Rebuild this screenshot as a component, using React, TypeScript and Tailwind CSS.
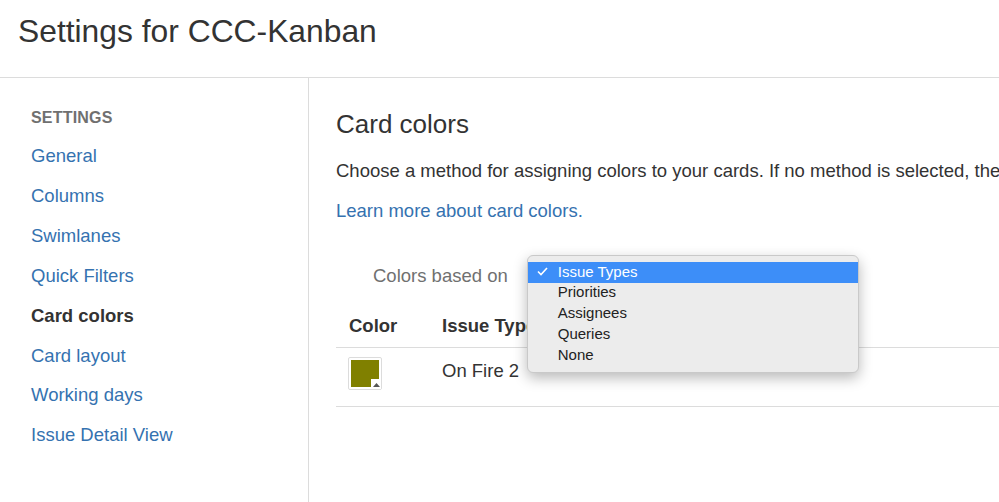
const NAV = [
  { label: "General" },
  { label: "Columns" },
  { label: "Swimlanes" },
  { label: "Quick Filters" },
  { label: "Card colors", active: true },
  { label: "Card layout" },
  { label: "Working days" },
  { label: "Issue Detail View" },
];

const OPTIONS = ["Issue Types", "Priorities", "Assignees", "Queries", "None"];

function ColorSwatch() {
  return (
    <div className="relative h-[33px] w-[34px] rounded-[2px] border border-[#dcdcdc] bg-white p-[2px]">
      <div className="h-full w-full bg-[#808000]" />
      <div className="absolute right-0 bottom-0 flex h-[10px] w-[10px] items-end justify-center bg-white pb-[2px]">
        <svg width="7" height="4" viewBox="0 0 7 4">
          <path d="M0 4 L3.5 0 L7 4 Z" fill="#555" />
        </svg>
      </div>
    </div>
  );
}

function SelectMenu() {
  return (
    <div className="absolute top-[-9px] left-0 z-10 w-[332px] rounded-[6px] border border-[#c9c9c9] bg-[#ececec] pt-[6px] pb-[5px] shadow-[0_5px_14px_rgba(0,0,0,0.28)]">
      {OPTIONS.map((opt, i) => (
        <div
          key={opt}
          className={
            i === 0
              ? "relative h-[21px] bg-[#3d8ef8] pl-[30px] text-[15px] leading-[19px] text-white"
              : "relative h-[21px] pl-[30px] text-[15px] leading-[17px] text-[#222]"
          }
        >
          {i === 0 && (
            <svg className="absolute top-[5px] left-[9px]" width="11" height="9" viewBox="0 0 11 9">
              <path d="M1 4.5 L4 7.5 L10 1" stroke="white" strokeWidth="1.6" fill="none" />
            </svg>
          )}
          {opt}
        </div>
      ))}
    </div>
  );
}

export default function App() {
  return (
    <div
      className="h-[502px] w-full overflow-hidden bg-white text-[#333]"
      style={{ fontFamily: '"Liberation Sans", Arial, Helvetica, sans-serif' }}
    >
      <header className="h-[78px] border-b border-[#dcdcdc] pl-[18px]">
        <h1 className="pt-[12px] text-[31.8px] leading-[38px] font-normal">Settings for CCC-Kanban</h1>
      </header>

      <div className="flex h-[424px]">
        <aside className="w-[309px] shrink-0 border-r border-[#dcdcdc] pt-[30px] pl-[31px]">
          <p className="text-[16px] leading-[20px] font-bold tracking-[0.2px] text-[#707070] uppercase">Settings</p>
          <nav className="mt-[8px] flex flex-col">
            {NAV.map((item) =>
              item.active ? (
                <span key={item.label} className="text-[18.5px] leading-[39.9px] font-bold text-[#333]">
                  {item.label}
                </span>
              ) : (
                <a key={item.label} className="text-[18.5px] leading-[39.9px] text-[#3572b0]">
                  {item.label}
                </a>
              )
            )}
          </nav>
        </aside>

        <main className="min-w-0 flex-1 pt-[30px] pl-[27px]">
          <h2 className="text-[26px] leading-[32px] font-normal">Card colors</h2>
          <p className="mt-[19px] text-[18.5px] leading-[24px] whitespace-nowrap">
            Choose a method for assigning colors to your cards. If no method is selected, the board will use a default color.
          </p>
          <a className="mt-[16px] block text-[18.5px] leading-[24px] text-[#3572b0]">Learn more about card colors.</a>

          <div className="mt-[41px] flex items-center pl-[37px]">
            <span className="text-[18.5px] leading-[24px] text-[#707070]">Colors based on</span>
            <div className="relative ml-[19px] h-[24px] w-[332px]">
              <SelectMenu />
            </div>
          </div>

          <div className="mt-[16px]">
            <div className="flex h-[44px] items-center border-b border-[#dcdcdc]">
              <span className="w-[106px] pl-[13px] text-[18.5px] font-bold">Color</span>
              <span className="text-[18.5px] font-bold">Issue Type</span>
            </div>
            <div className="flex h-[59px] items-start border-b border-[#dcdcdc]">
              <div className="w-[106px] pt-[9px] pl-[12px]">
                <ColorSwatch />
              </div>
              <span className="pt-[11px] text-[18.5px] leading-[24px]">On Fire 2</span>
            </div>
          </div>
        </main>
      </div>
    </div>
  );
}
